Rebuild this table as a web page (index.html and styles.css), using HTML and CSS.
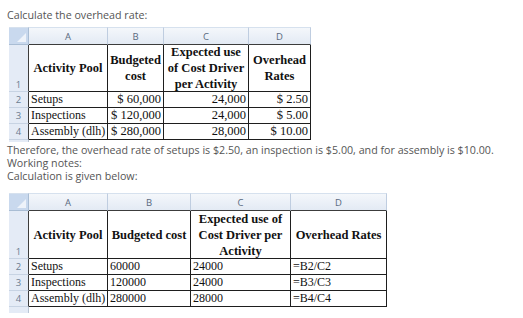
FILE: index.html
```html
<!DOCTYPE html>
<html>
<head>
<meta charset="utf-8">
<link rel="stylesheet" href="styles.css">
</head>
<body>
<div class="page">
  <p class="txt first">Calculate the overhead rate:</p>
  <div class="sheet s1">
    <div class="corner"></div>
    <div class="ch">A</div><div class="ch">B</div><div class="ch">C</div><div class="ch">D</div>

    <div class="rn rn-bottom">1</div>
    <div class="cell hd">Activity Pool</div>
    <div class="cell hd">Budgeted<br>cost</div>
    <div class="cell hd">Expected use<br>of Cost Driver<br>per Activity</div>
    <div class="cell hd">Overhead<br>Rates</div>

    <div class="rn">2</div>
    <div class="cell">Setups</div>
    <div class="cell num">$ 60,000</div>
    <div class="cell num">24,000</div>
    <div class="cell num">$ 2.50</div>

    <div class="rn">3</div>
    <div class="cell">Inspections</div>
    <div class="cell num">$ 120,000</div>
    <div class="cell num">24,000</div>
    <div class="cell num">$ 5.00</div>

    <div class="rn">4</div>
    <div class="cell">Assembly (dlh)</div>
    <div class="cell num">$ 280,000</div>
    <div class="cell num">28,000</div>
    <div class="cell num">$ 10.00</div>

    <div class="rn tail"></div>
  </div>

  <div class="notes">
    <p class="txt">Therefore, the overhead rate of setups is $2.50, an inspection is $5.00, and for assembly is $10.00.</p>
    <p class="txt">Working notes:</p>
    <p class="txt">Calculation is given below:</p>
  </div>

  <div class="sheet s2">
    <div class="corner"></div>
    <div class="ch">A</div><div class="ch">B</div><div class="ch">C</div><div class="ch">D</div>

    <div class="rn rn-bottom">1</div>
    <div class="cell hd">Activity Pool</div>
    <div class="cell hd">Budgeted cost</div>
    <div class="cell hd">Expected use of<br>Cost Driver per<br>Activity</div>
    <div class="cell hd">Overhead Rates</div>

    <div class="rn">2</div>
    <div class="cell">Setups</div>
    <div class="cell">60000</div>
    <div class="cell">24000</div>
    <div class="cell">=B2/C2</div>

    <div class="rn">3</div>
    <div class="cell">Inspections</div>
    <div class="cell">120000</div>
    <div class="cell">24000</div>
    <div class="cell">=B3/C3</div>

    <div class="rn">4</div>
    <div class="cell">Assembly (dlh)</div>
    <div class="cell">280000</div>
    <div class="cell">28000</div>
    <div class="cell">=B4/C4</div>

    <div class="rn tail"></div>
  </div>
</div>
</body>
</html>
```

FILE: styles.css
```css
* { box-sizing: border-box; }

html, body {
  margin: 0;
  padding: 0;
  background: #ffffff;
}

.page {
  padding: 8px 0 0 7px;
}

.txt {
  margin: 0;
  font-family: "Open Sans", Lato, sans-serif;
  font-size: 10.7px;
  line-height: 13px;
  color: #555555;
  white-space: nowrap;
}

.first {
  line-height: 15px;
  margin-bottom: 4px;
}

.notes {
  margin-top: 2px;
  margin-bottom: 10px;
}

.sheet {
  display: grid;
  margin-left: 2px;
  width: max-content;
}

.s1 {
  grid-template-columns: 20px 79px 56px 85px 62px;
  grid-template-rows: 18px 47px 16px 16px 16px 2px;
}

.s2 {
  grid-template-columns: 20px 79px 83px 100px 96px;
  grid-template-rows: 18px 48px 16px 16px 16px 6px;
}

.corner {
  position: relative;
  background: #c9d9ee;
  border-right: 1px solid #a9bdd4;
  border-bottom: 1px solid #a9bdd4;
  border-top: 1px solid #d6e1ee;
}

.corner::after {
  content: "";
  position: absolute;
  right: 2px;
  bottom: 2px;
  width: 0;
  height: 0;
  border-left: 9px solid transparent;
  border-bottom: 9px solid #eef3fa;
}

.ch {
  background: linear-gradient(#f4f7fb, #e3eaf4);
  border-top: 1px solid #d6e1ee;
  border-right: 1px solid #bfcde0;
  border-bottom: 1px solid #3c3c3c;
  font-family: "Open Sans", "Liberation Sans", sans-serif;
  font-size: 9.5px;
  color: #5a6a7e;
  display: flex;
  align-items: center;
  justify-content: center;
}

.rn {
  background: #e4ebf6;
  border-right: 1px solid #3c3c3c;
  border-bottom: 1px solid #c7d3e3;
  font-family: "Open Sans", "Liberation Sans", sans-serif;
  font-size: 9.5px;
  color: #6b7b8f;
  display: flex;
  align-items: center;
  justify-content: center;
}

.rn-bottom {
  align-items: flex-end;
  padding-bottom: 0;
}

.tail {
  grid-column: 1;
  border-bottom: none;
  border-right-color: #b9c6d6;
}

.cell {
  border-right: 1px solid #1e1e1e;
  border-bottom: 1px solid #1e1e1e;
  font-family: "Liberation Serif", "Times New Roman", serif;
  font-size: 12px;
  line-height: 15px;
  color: #111111;
  padding: 0 2px;
  white-space: nowrap;
  overflow: hidden;
  display: flex;
  align-items: center;
}

.num {
  justify-content: flex-end;
  font-size: 12.5px;
}

.hd {
  font-weight: bold;
  font-size: 12.5px;
  line-height: 16px;
  text-align: center;
  justify-content: center;
  padding: 0 1px;
}
```
